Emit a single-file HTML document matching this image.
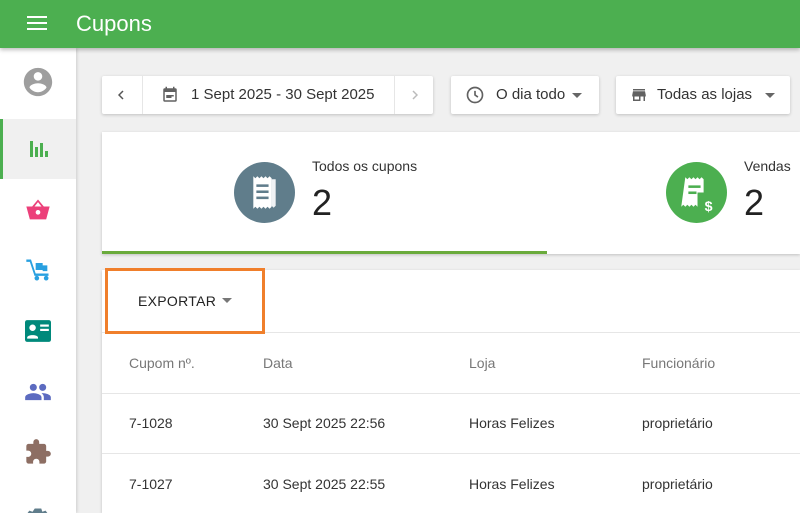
<!DOCTYPE html>
<html><head><style>
*{margin:0;padding:0;box-sizing:border-box}
html,body{width:800px;height:513px;overflow:hidden}
body{background:#f0f0f0;font-family:"Liberation Sans",Roboto,sans-serif;position:relative;color:#212121}
.hdr{position:absolute;left:0;top:0;width:800px;height:48px;background:#4caf50;box-shadow:0 2px 4px rgba(0,0,0,.25);z-index:3}
.hdr .t{position:absolute;left:76px;top:11px;color:#fff;font-size:22px}
.side{position:absolute;left:0;top:48px;width:76px;height:465px;background:#fff;box-shadow:1px 0 3px rgba(0,0,0,.15);z-index:2}
.ic{position:absolute;left:0;width:76px;height:60px;display:flex;align-items:center;justify-content:center}
.box{position:absolute;background:#fff;box-shadow:0 1px 3px rgba(0,0,0,.2);border-radius:2px;font-size:15px;color:#333}
.card{position:absolute;background:#fff;box-shadow:0 1px 3px rgba(0,0,0,.2)}
.th{position:absolute;font-size:14px;color:#777}
.td{position:absolute;font-size:14px;color:#333}
.line{position:absolute;left:102px;width:698px;height:1px;background:#e6e6e6}
</style></head><body>
<div class="hdr">
<svg style="position:absolute;left:27px;top:15px" width="20" height="16"><rect y="1" width="20" height="2" fill="#fff"/><rect y="7" width="20" height="2" fill="#fff"/><rect y="13" width="20" height="2" fill="#fff"/></svg>
<div class="t">Cupons</div></div>
<div class="side">
<div class="ic" style="top:4px"><svg width="34" height="34" viewBox="0 0 24 24"><path fill="#9e9e9e" d="M12 2C6.48 2 2 6.48 2 12s4.48 10 10 10 10-4.48 10-10S17.52 2 12 2zm0 3c1.66 0 3 1.34 3 3s-1.34 3-3 3-3-1.34-3-3 1.34-3 3-3zm0 14.2c-2.5 0-4.710-1.28-6-3.22.03-1.99 4-3.08 6-3.08 1.99 0 5.97 1.09 6 3.08-1.29 1.94-3.5 3.22-6 3.22z"/></svg></div>
<div class="ic" style="top:71px;height:60px;background:#f0f0f0;border-left:3px solid #4caf50"><svg width="24" height="24" viewBox="0 0 24 24"><path fill="#4caf50" d="M2 4h3v16H2zM7 10h3v10H7zM12 6h3v14h-3zM17 14h3v6h-3z"/></svg></div>
<div class="ic" style="top:132px"><svg width="28" height="28" viewBox="0 0 24 24"><path fill="#ec407a" d="M12 3l-5 6H2l3 11h14l3-11h-5zm0 2.2L15 9H9zM12 12a2 2 0 110 4 2 2 0 010-4z"/></svg></div>
<div class="ic" style="top:192px"><svg width="28" height="28" viewBox="0 0 24 24"><path fill="#29a0e0" d="M2 3h4l4 12h11v2H9L5 5H2zM10 6h6v6h-6zM16 8h4v5h-4zM9 19a2 2 0 104 0 2 2 0 00-4 0zm8 0a2 2 0 104 0 2 2 0 00-4 0z"/></svg></div>
<div class="ic" style="top:253px"><svg width="26" height="24" viewBox="0 0 24 22"><rect x="0" y="1" width="24" height="20" rx="2" fill="#00897b"/><circle cx="7" cy="8" r="3" fill="#fff"/><path d="M2 17c0-3 10-3 10 0v1H2z" fill="#fff"/><rect x="14" y="5" width="8" height="2" fill="#fff"/><rect x="14" y="9" width="8" height="2" fill="#fff"/></svg></div>
<div class="ic" style="top:314px"><svg width="28" height="28" viewBox="0 0 24 24"><path fill="#5c6bc0" d="M16 11c1.66 0 3-1.34 3-3s-1.34-3-3-3-3 1.34-3 3 1.34 3 3 3zm-8 0c1.66 0 3-1.34 3-3S9.66 5 8 5 5 6.34 5 8s1.34 3 3 3zm0 2c-2.33 0-7 1.17-7 3.5V19h14v-2.5C15 14.17 10.33 13 8 13zm8 0c-.29 0-.62.02-.97.05 1.160.84 1.97 1.97 1.97 3.45V19h6v-2.5c0-2.33-4.67-3.5-7-3.5z"/></svg></div>
<div class="ic" style="top:374px"><svg width="28" height="28" viewBox="0 0 24 24"><path fill="#8d6e63" d="M20.5 11H19V7c0-1.1-.9-2-2-2h-4V3.5a2.5 2.5 0 00-5 0V5H4c-1.1 0-2 .9-2 2v3.8h1.5c1.5 0 2.7 1.2 2.7 2.7S5 16.2 3.5 16.2H2V20c0 1.1.9 2 2 2h3.8v-1.5c0-1.5 1.2-2.7 2.7-2.7s2.7 1.2 2.7 2.7V22H17c1.1 0 2-.9 2-2v-4h1.5a2.5 2.5 0 000-5z"/></svg></div>
<div class="ic" style="top:434px;height:40px;align-items:flex-end"><svg width="26" height="14" viewBox="0 0 24 12"><path fill="#607d8b" d="M9 0h6l1 3 3-1 3 4-2 3 1 3H2l1-3-2-3 3-4 3 1z"/></svg></div>
</div>
<div class="box" style="left:102px;top:76px;width:331px;height:38px">
<div style="position:absolute;left:40px;top:0;width:1px;height:38px;background:#e6e6e6"></div>
<div style="position:absolute;left:292px;top:0;width:1px;height:38px;background:#e6e6e6"></div>
<svg style="position:absolute;left:16px;top:14px" width="6" height="10"><path d="M5 1L1 5l4 4" fill="none" stroke="#555" stroke-width="1.5"/></svg>
<svg style="position:absolute;left:310px;top:14px" width="6" height="10"><path d="M1 1l4 4-4 4" fill="none" stroke="#bbb" stroke-width="1.5"/></svg>
<svg style="position:absolute;left:59px;top:10px" width="18" height="18" viewBox="0 0 24 24"><path fill="#616161" d="M17 12H7v2h10zm2-9h-1V1h-2v2H8V1H6v2H5a2 2 0 00-2 2v14a2 2 0 002 2h14a2 2 0 002-2V5a2 2 0 00-2-2zm0 16H5V8h14zm-5-5H7v2h7z"/></svg>
<span style="position:absolute;left:89px;top:10px">1 Sept 2025 - 30 Sept 2025</span></div>
<div class="box" style="left:451px;top:76px;width:148px;height:38px">
<svg style="position:absolute;left:14px;top:9px" width="20" height="20" viewBox="0 0 24 24"><circle cx="12" cy="12" r="9" fill="none" stroke="#616161" stroke-width="2"/><path d="M12 7v5l3.5 2.5" fill="none" stroke="#616161" stroke-width="2"/></svg>
<span style="position:absolute;left:45px;top:10px">O dia todo</span>
<svg style="position:absolute;left:121px;top:17px" width="10" height="5"><path d="M0 0h10L5 5z" fill="#666"/></svg></div>
<div class="box" style="left:616px;top:76px;width:174px;height:38px">
<svg style="position:absolute;left:14px;top:10px" width="18" height="18" viewBox="0 0 24 24"><path fill="#616161" d="M20 4H4v2h16zm1 10v-2l-1-5H4l-1 5v2h1v6h10v-6h4v6h2v-6zm-9 4H6v-4h6z"/></svg>
<span style="position:absolute;left:41px;top:10px">Todas as lojas</span>
<svg style="position:absolute;left:149px;top:17px" width="10" height="5"><path d="M0 0h10L5 5z" fill="#666"/></svg></div>
<div class="card" style="left:102px;top:132px;width:698px;height:122px">
<div style="position:absolute;left:0;top:119px;width:445px;height:3px;background:#6aab3c"></div>
<svg style="position:absolute;left:132px;top:30px" width="61" height="61" viewBox="0 0 60 60"><circle cx="30" cy="30" r="30" fill="#607d8b"/><path d="M19 14l2 2 2-2 2 2 2-2 2 2 2-2 2 2 2-2 2 2v28l-2 2-2-2-2 2-2-2-2 2-2-2-2 2-2-2-2 2z" fill="#fff"/><path d="M37 17h4v26l-2 2-2-2z" fill="#fff" opacity=".9"/><rect x="22" y="22" width="12" height="2.5" fill="#607d8b"/><rect x="22" y="28" width="12" height="2.5" fill="#607d8b"/><rect x="22" y="34" width="12" height="2.5" fill="#607d8b"/></svg>
<div style="position:absolute;left:210px;top:26px;font-size:14px;color:#333">Todos os cupons</div>
<div style="position:absolute;left:210px;top:50px;font-size:36px;color:#222">2</div>
<svg style="position:absolute;left:564px;top:30px" width="61" height="61" viewBox="0 0 60 60"><circle cx="30" cy="30" r="30" fill="#4caf50"/><path d="M19 15l2 2 2-2 2 2 2-2 2 2 2-2 2 2 2-2 2 2v13h-6v14l-2-2-2 2-2-2-2 2-2-2-2 2-2-2-2 2z" fill="#fff"/><rect x="22" y="23" width="12" height="2.5" fill="#4caf50"/><rect x="22" y="29" width="8" height="2.5" fill="#4caf50"/><text x="38" y="48" font-size="14" fill="#fff" font-family="Liberation Sans" font-weight="bold">$</text></svg>
<div style="position:absolute;left:642px;top:26px;font-size:14px;color:#333">Vendas</div>
<div style="position:absolute;left:642px;top:50px;font-size:36px;color:#222">2</div>
</div>
<div class="card" style="left:102px;top:270px;width:698px;height:243px"></div>
<div class="line" style="top:332px"></div>
<div style="position:absolute;left:105px;top:268px;width:160px;height:66px;border:3px solid #f07f2b"></div>
<div style="position:absolute;left:138px;top:293px;font-size:14px;color:#222;letter-spacing:.3px">EXPORTAR</div>
<svg style="position:absolute;left:222px;top:298px" width="10" height="5"><path d="M0 0h10L5 5z" fill="#777"/></svg>
<div class="th" style="left:129px;top:355px">Cupom nº.</div>
<div class="th" style="left:263px;top:355px">Data</div>
<div class="th" style="left:469px;top:355px">Loja</div>
<div class="th" style="left:642px;top:355px">Funcionário</div>
<div class="line" style="top:393px"></div>
<div class="td" style="left:129px;top:415px">7-1028</div>
<div class="td" style="left:263px;top:415px">30 Sept 2025 22:56</div>
<div class="td" style="left:469px;top:415px">Horas Felizes</div>
<div class="td" style="left:642px;top:415px">proprietário</div>
<div class="line" style="top:453px"></div>
<div class="td" style="left:129px;top:476px">7-1027</div>
<div class="td" style="left:263px;top:476px">30 Sept 2025 22:55</div>
<div class="td" style="left:469px;top:476px">Horas Felizes</div>
<div class="td" style="left:642px;top:476px">proprietário</div>
</body></html>
